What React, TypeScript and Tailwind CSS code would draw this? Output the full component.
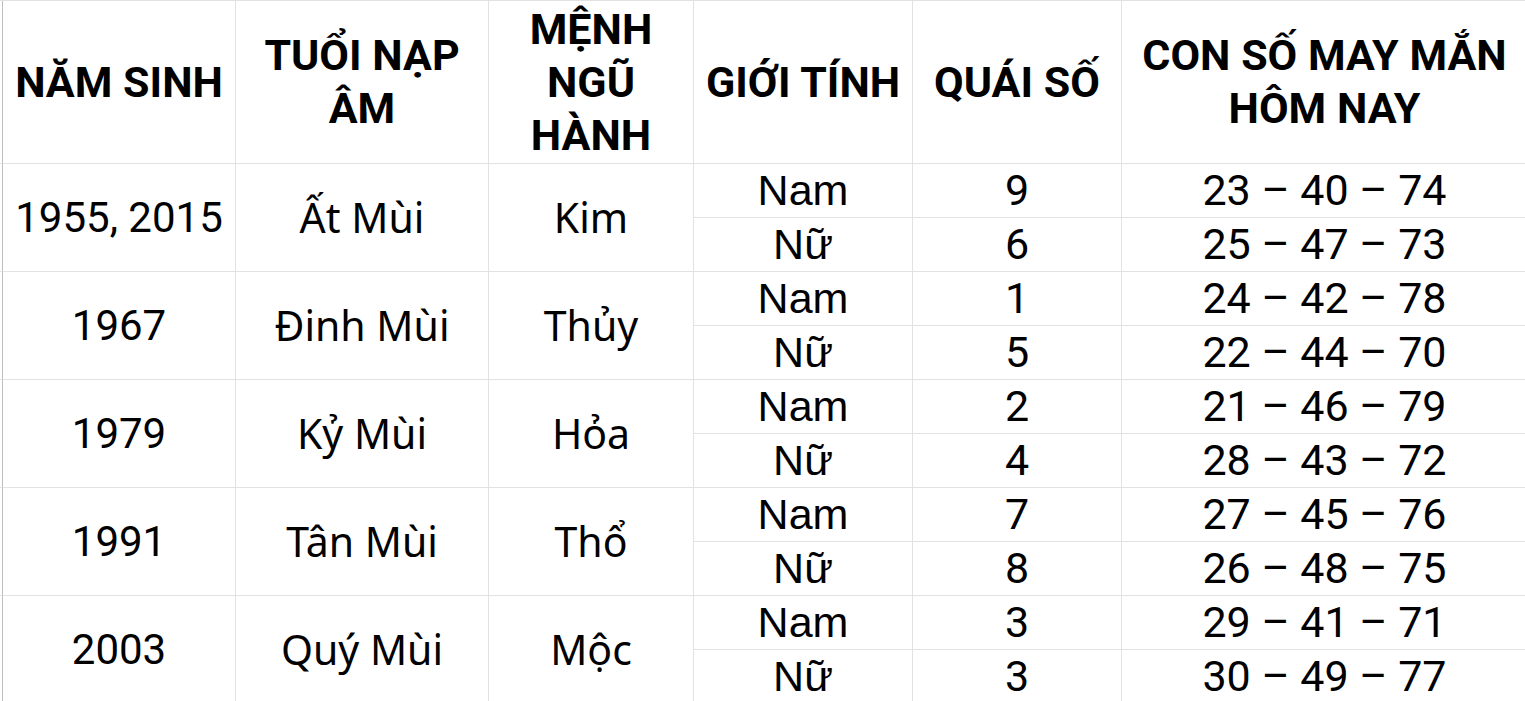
const rows = [
  { year: "1955, 2015", tuoi: "Ất Mùi", menh: "Kim", sub: [["Nam", "9", "23 – 40 – 74"], ["Nữ", "6", "25 – 47 – 73"]] },
  { year: "1967", tuoi: "Đinh Mùi", menh: "Thủy", sub: [["Nam", "1", "24 – 42 – 78"], ["Nữ", "5", "22 – 44 – 70"]] },
  { year: "1979", tuoi: "Kỷ Mùi", menh: "Hỏa", sub: [["Nam", "2", "21 – 46 – 79"], ["Nữ", "4", "28 – 43 – 72"]] },
  { year: "1991", tuoi: "Tân Mùi", menh: "Thổ", sub: [["Nam", "7", "27 – 45 – 76"], ["Nữ", "8", "26 – 48 – 75"]] },
  { year: "2003", tuoi: "Quý Mùi", menh: "Mộc", sub: [["Nam", "3", "29 – 41 – 71"], ["Nữ", "3", "30 – 49 – 77"]] },
]

// column widths include the 1px right border
const widths = ["w-[233px]", "w-[253px]", "w-[205px]", "w-[219px]", "w-[209px]", "w-[406px]"]

const headers = ["NĂM SINH", "TUỔI NẠP ÂM", "MỆNH NGŨ HÀNH", "GIỚI TÍNH", "QUÁI SỐ", "CON SỐ MAY MẮN HÔM NAY"]

const cell = "shrink-0 flex items-center justify-center text-center border-r border-b border-[#e2e2e2] text-black"
const roboto = "font-['Roboto',sans-serif]"
const noto = "font-['Noto_Sans',sans-serif]"
const arial = "font-['Liberation_Sans',Arial,sans-serif]"

function Stub() {
  return <div className="w-[3px] shrink-0 border-r border-[#bdbdbd] border-b border-b-[#e2e2e2]"></div>
}

export default function App() {
  return (
    <div className="w-[1525px] h-[701px] overflow-hidden bg-white">
      <div className="flex flex-col w-[1528px] border-t border-[#e2e2e2]">
        <div className="flex h-[163px]">
          <Stub />
          {headers.map((h, i) => (
            <div key={h} className={`${cell} ${widths[i]} ${roboto} font-bold text-[43px] leading-[53px] px-1`}>
              {h}
            </div>
          ))}
        </div>
        {rows.map((r) => (
          <div key={r.year} className="flex h-[108px]">
            <Stub />
            <div className={`${cell} ${widths[0]} ${roboto} text-[42px]`}>{r.year}</div>
            <div className={`${cell} ${widths[1]} ${noto} text-[41px]`}>{r.tuoi}</div>
            <div className={`${cell} ${widths[2]} ${noto} text-[41px]`}>{r.menh}</div>
            <div className="flex flex-col">
              {r.sub.map((s) => (
                <div key={s[0]} className="flex h-[54px]">
                  <div className={`${cell} ${widths[3]} ${arial} text-[43px]`}>{s[0]}</div>
                  <div className={`${cell} ${widths[4]} ${roboto} text-[43px]`}>{s[1]}</div>
                  <div className={`${cell} ${widths[5]} ${roboto} text-[43px]`}>{s[2]}</div>
                </div>
              ))}
            </div>
          </div>
        ))}
      </div>
    </div>
  )
}
